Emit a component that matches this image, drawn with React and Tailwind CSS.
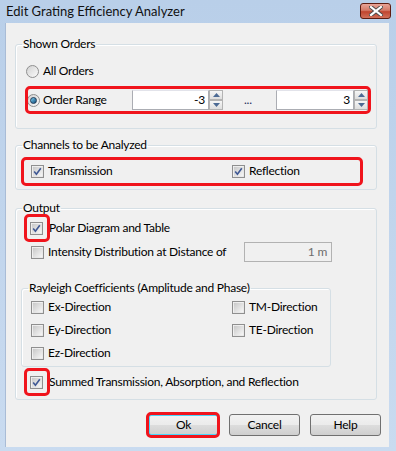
import React from 'react'

const font = { fontFamily: 'Lato, "Liberation Sans", Arial, sans-serif' }

const CheckBox = ({ checked }) => (
  <span className="flex h-[13px] w-[13px] shrink-0 items-center justify-center border border-[#8f8f8f] bg-gradient-to-br from-[#dcdcdc] to-[#fdfdfd]">
    <span className="flex h-[11px] w-[11px] items-center justify-center border border-[#f4f4f4]/60 bg-gradient-to-br from-[#c9c9c9] to-[#f6f6f6]">
      {checked && (
        <svg width="9" height="9" viewBox="0 0 9 9">
          <path d="M1.2 4.6 L3.4 7.2 L7.8 1.2" fill="none" stroke="#3f5894" strokeWidth="1.6" />
        </svg>
      )}
    </span>
  </span>
)

const Radio = ({ checked }) => (
  <span className="flex h-[13px] w-[13px] shrink-0 items-center justify-center rounded-full border border-[#8f8f8f] bg-gradient-to-br from-[#d2d2d2] to-[#fbfbfb]">
    {checked && (
      <span className="h-[7px] w-[7px] rounded-full border border-[#1d3a57] bg-gradient-to-br from-[#7fd0f2] to-[#0c4f7c]" />
    )}
  </span>
)

const Mark = ({ className }) => (
  <span className={`pointer-events-none absolute rounded-[5px] border-[3px] border-[#f0141c] ${className}`} />
)

const Check = ({ label, checked, className = '', mark }) => (
  <div className={`relative flex h-[20px] items-center gap-[4px] ${className}`}>
    <span className="relative flex">
      <CheckBox checked={checked} />
      {mark && <Mark className="-left-[6px] -top-[8px] h-[28px] w-[26px]" />}
    </span>
    <span>{label}</span>
  </div>
)

const Spinner = () => (
  <div className="flex h-[20px] w-[14px] flex-col">
    {['up', 'down'].map((d) => (
      <span key={d} className="flex h-[10px] items-center justify-center border border-[#b3b3b3] bg-gradient-to-b from-[#f6f6f6] to-[#dedede]">
        <svg width="7" height="4" viewBox="0 0 7 4">
          <path d={d === 'up' ? 'M0 4 L3.5 0 L7 4 Z' : 'M0 0 L3.5 4 L7 0 Z'} fill="#4c6a94" />
        </svg>
      </span>
    ))}
  </div>
)

const NumberBox = ({ value, width }) => (
  <div className="flex items-center">
    <div className={`flex h-[20px] items-center justify-end border border-[#abadb3] border-t-[#e2e3ea] bg-white pr-[3px] ${width}`}>{value}</div>
    <Spinner />
  </div>
)

const Group = ({ title, className = '', children }) => (
  <fieldset className={`rounded-[3px] border border-[#d5dfe5] shadow-[inset_1px_1px_0_#fff] ${className}`}>
    <legend className="ml-[6px] px-[1px] leading-[16px]">{title}</legend>
    {children}
  </fieldset>
)

const Button = ({ children, primary }) => (
  <div className="relative">
    <div className={`flex h-[22px] w-[71px] items-center justify-center rounded-[3px] border ${primary ? 'border-[#3c7fb1] shadow-[inset_0_0_0_1px_#48d7fb]' : 'border-[#707070]'} bg-[linear-gradient(#f2f2f2_0%,#ebebeb_50%,#dddddd_50%,#cfcfcf_100%)]`}>
      {children}
    </div>
    {primary && <Mark className="-left-[2px] -top-[2px] h-[26px] w-[74px]" />}
  </div>
)

export default function App() {
  return (
    <div style={font} className="flex h-[451px] w-[396px] flex-col bg-gradient-to-b from-[#b9cfe9] to-[#c9dbf0] text-[12px] tracking-[-0.25px] text-black">
      {/* title bar */}
      <div className="flex h-[23px] shrink-0 items-start">
        <div className="pl-[6px] pt-[3px] text-[13px] leading-[17px] tracking-[0px] text-[#111]">Edit Grating Efficiency Analyzer</div>
        <div className="ml-auto mr-[5px] mt-[3px] flex h-[16px] w-[31px] items-center justify-center rounded-[3px] border border-[#5e1d12] bg-[linear-gradient(#e8a497_0%,#d47a68_45%,#c0452f_55%,#d0705a_100%)]">
          <svg width="14" height="10" viewBox="0 0 14 10">
            <path d="M2 1 L12 9 M12 1 L2 9" stroke="#4a4a4a" strokeWidth="4" strokeLinecap="square" />
            <path d="M2 1 L12 9 M12 1 L2 9" stroke="#fff" strokeWidth="2.2" strokeLinecap="square" />
          </svg>
        </div>
      </div>

      {/* client area */}
      <div className="mb-[4px] ml-[5px] mr-[7px] flex flex-1 flex-col border-l border-[#a9bcd6] bg-[#f0f0f0] pl-[9px]">
        <Group title="Shown Orders" className="mt-[13px] w-[362px] pb-[16px]">
          <div className="mt-[9px] flex h-[20px] items-center gap-[4px] pl-[10px]">
            <Radio />
            <span>All Orders</span>
          </div>
          <div className="relative ml-[10px] mt-[7px] flex h-[24px] w-[345px] items-center">
            <Mark className="-left-[1px] -top-[2px] h-[28px] w-[346px]" />
            <span className="ml-[1px]">
              <Radio checked />
            </span>
            <span className="ml-[3px] w-[89px]">Order Range</span>
            <NumberBox value="-3" width="w-[77px]" />
            <span className="ml-[21px] w-[32px] text-[#1c2f5c]">...</span>
            <NumberBox value="3" width="w-[78px]" />
          </div>
        </Group>

        <Group title="Channels to be Analyzed" className="mt-[8px] w-[362px] pb-[6px]">
          <div className="relative ml-[5px] mt-[6px] flex h-[24px] w-[342px] items-center">
            <Mark className="-left-[0px] -top-[2px] h-[29px] w-[342px]" />
            <Check label="Transmission" checked className="ml-[10px] w-[201px] gap-[3px]" />
            <Check label="Reflection" checked className="gap-[4px]" />
          </div>
        </Group>

        <Group title="Output" className="mt-[10px] w-[362px] pb-[7px]">
          <Check label="Polar Diagram and Table" checked mark className="ml-[14px] mt-[2px] gap-[6px]" />
          <div className="ml-[15px] mt-[3px] flex h-[22px] items-center">
            <CheckBox />
            <span className="ml-[4px] w-[196px]">Intensity Distribution at Distance of</span>
            <div className="flex h-[20px] w-[88px] items-center justify-end border border-[#b2b2b2] bg-[#f0f0f0] pr-[4px] text-[#6d6d6d]">1 m</div>
          </div>

          <Group title="Rayleigh Coefficients (Amplitude and Phase)" className="ml-[5px] mt-[17px] w-[310px] pb-[3px]">
            <div className="ml-[9px] mt-[1px] grid grid-cols-[201px_1fr] gap-y-[3px]">
              <Check label="Ex-Direction" />
              <Check label="TM-Direction" />
              <Check label="Ey-Direction" />
              <Check label="TE-Direction" />
              <Check label="Ez-Direction" />
            </div>
          </Group>

          <Check label="Summed Transmission, Absorption, and Reflection" checked mark className="ml-[14px] mt-[5px] gap-[6px]" />
        </Group>

        <div className="mt-[14px] flex justify-end gap-[10px] pr-[8px]">
          <Button primary>Ok</Button>
          <Button>Cancel</Button>
          <Button>Help</Button>
        </div>
      </div>
    </div>
  )
}
